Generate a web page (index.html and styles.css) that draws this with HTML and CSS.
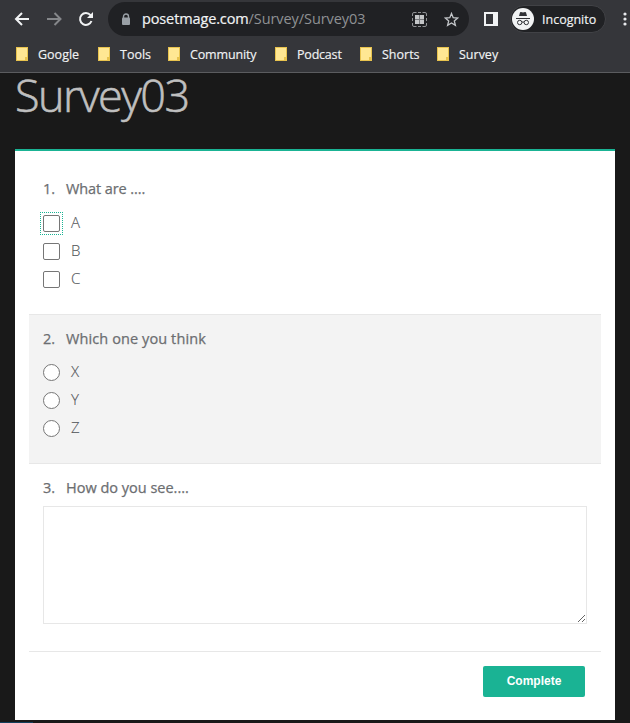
FILE: index.html
```html
<!DOCTYPE html>
<html lang="en">
<head>
<meta charset="utf-8">
<title>Survey03</title>
<link rel="stylesheet" href="styles.css">
</head>
<body>
<header class="browser">
  <div class="toolbar">
    <svg class="nav" width="108" height="38" viewBox="0 0 108 38" fill="none" stroke-width="2">
      <path d="M29 19H16.500M22 13l-6 6 6 6" stroke="#f1f3f4"/>
      <path d="M47 19H60M54.500 13l6 6-6 6" stroke="#85878a"/>
      <path d="M90.500 15.200A5.900 5.900 0 1 0 91.500 21" stroke="#f1f3f4"/>
      <path d="M93 12v6h-6z" fill="#f1f3f4"/>
    </svg>
    <div class="omnibox">
      <svg class="lock" width="10" height="13" viewBox="0 0 10 13"><path d="M2.500 5V3.500a2.500 2.500 0 0 1 5 0V5" fill="none" stroke="#9aa0a6" stroke-width="1.400"/><rect x="1" y="4.500" width="8" height="7.500" rx="1" fill="#9aa0a6"/></svg>
      <span class="url"><span class="host">posetmage.com</span><span class="path">/Survey/Survey03</span></span>
      <svg class="qr" width="15" height="15" viewBox="0 0 15 15"><path d="M.5 4V2Q.5.500 2 .5h2.500M6 .5h3M10.500.500H13q1.500 0 1.500 1.500v2M14.500 6v3M14.500 11v2q0 1.500-1.500 1.500h-2.500M9 14.500H6M4.500 14.500H2Q.5 14.500.500 13v-2M.5 9V6" fill="none" stroke="#909295"/><path d="M3 3h4v4H3zM8 3h4v4H8zM3 8h4v4H3zM8 8h4v4H8z" fill="#c4c6c8"/><path d="M7 3h1v9H7zM3 7h9v1H3z" fill="#77797c"/></svg>
      <svg class="star" width="15" height="15" viewBox="0 0 15 15"><path d="M7.500 1.500l1.700 4.200 4.500.3-3.400 2.900 1.100 4.400-3.900-2.400-3.900 2.400 1.100-4.400L1.300 6l4.500-.3z" fill="none" stroke="#c4c7ca" stroke-width="1.300"/></svg>
    </div>
    <svg class="panel" width="14" height="14" viewBox="0 0 14 14"><path d="M0 0h14v14H0zM2 2v10h7V2z" fill="#f1f3f4" fill-rule="evenodd"/></svg>
    <div class="profile">
      <svg width="22" height="22" viewBox="0 0 22 22"><circle cx="11" cy="11" r="11" fill="#f1f3f4"/><path d="M7 8l1-3.500q.3-.8 1-.5l2 .5 2-.5q.7-.3 1 .5L15 8z" fill="#303236"/><path d="M4 10.500h14" stroke="#303236"/><g fill="none" stroke="#303236"><circle cx="7.700" cy="14.500" r="2.200"/><circle cx="14.300" cy="14.500" r="2.200"/><path d="M10 14.200q1-.6 2 0"/></g></svg>
      <span class="profile-name">Incognito</span>
    </div>
    <svg class="more" width="4" height="14" viewBox="0 0 4 14" fill="#e8eaed"><circle cx="2" cy="2" r="1.600"/><circle cx="2" cy="7" r="1.600"/><circle cx="2" cy="12" r="1.600"/></svg>
  </div>
  <nav class="bookmarks">
    <a class="bm"><i class="folder"></i><span>Google</span></a>
    <a class="bm"><i class="folder"></i><span>Tools</span></a>
    <a class="bm"><i class="folder"></i><span class="t-community">Community</span></a>
    <a class="bm"><i class="folder"></i><span class="t-podcast">Podcast</span></a>
    <a class="bm"><i class="folder"></i><span>Shorts</span></a>
    <a class="bm"><i class="folder"></i><span>Survey</span></a>
  </nav>
</header>
<main>
  <h1>Survey03</h1>
  <form class="card">
    <section class="question first">
      <h2><span class="num">1.</span><span class="q1">What are ....</span></h2>
      <label class="option"><span class="box focused"></span><span>A</span></label>
      <label class="option"><span class="box"></span><span>B</span></label>
      <label class="option"><span class="box"></span><span>C</span></label>
    </section>
    <section class="question shaded">
      <h2><span class="num">2.</span><span class="q2">Which one you think</span></h2>
      <label class="option"><span class="box round"></span><span>X</span></label>
      <label class="option"><span class="box round"></span><span>Y</span></label>
      <label class="option"><span class="box round"></span><span>Z</span></label>
    </section>
    <section class="question last">
      <h2><span class="num">3.</span><span class="q3">How do you see....</span></h2>
      <textarea></textarea>
    </section>
    <footer><button type="button">Complete</button></footer>
  </form>
</main>
<div class="status"></div>
</body>
</html>
```
FILE: styles.css
```css
* { box-sizing: border-box; }
body {
  margin: 0;
  height: 723px;
  overflow: hidden;
  display: flex;
  flex-direction: column;
  background: #191919;
  font-family: "Open Sans", "Noto Sans", sans-serif;
}
.browser {
  height: 73px;
  flex: none;
  background: #35363a;
  border-bottom: 1px solid #5b5c5f;
  color: #f1f3f4;
}
.toolbar { height: 38px; display: flex; align-items: center; }
.toolbar > * { flex: none; }
.omnibox {
  width: 361px;
  height: 34px;
  border-radius: 17px;
  background: #202124;
  display: flex;
  align-items: center;
  padding-left: 13px;
}
.omnibox > * { flex: none; }
.url { width: 270px; margin-left: 11px; font-size: 14.5px; line-height: 20px; white-space: nowrap; }
.host { letter-spacing: -.13px; -webkit-text-stroke: .2px; }
.path { color: #8f9194; letter-spacing: -.07px; }
.star { margin-left: 17px; }
.panel { margin-left: 15px; }
.profile {
  width: 96px;
  height: 28px;
  margin-left: 12px;
  padding-left: 1px;
  border: 1px solid #414246;
  border-radius: 14px;
  background: #202124;
  display: flex;
  align-items: center;
  -webkit-text-stroke: .15px;
}
.profile-name { margin-left: 8px; font-size: 12.5px; white-space: nowrap; }
.more { margin-left: 17px; }
.bookmarks {
  height: 34px;
  padding-left: 16px;
  display: grid;
  grid-template-columns: 82px 70px 107px 85px 77px 80px;
  align-items: center;
  font-size: 12.5px;
  line-height: 16px;
  -webkit-text-stroke: .15px;
}
.bm { display: flex; align-items: center; height: 16px; white-space: nowrap; }
.t-community { letter-spacing: -.15px; }
.t-podcast { letter-spacing: -.2px; }
.folder {
  width: 12px;
  height: 14px;
  margin: -2px 10px 0 0;
  flex: none;
  background: linear-gradient(#e8c34e, #e8c34e) 8px 9px / 2px 4px no-repeat, #ffe793;
  border: 1px solid #e8c34e;
}
main { padding: 0 15px; }
h1 {
  margin: 0;
  height: 76px;
  font-size: 45px;
  font-weight: 300;
  line-height: 43px;
  letter-spacing: -1.55px;
  color: #bfbfbf;
  -webkit-text-stroke: .6px;
}
.card {
  height: 571px;
  padding: 0 14px;
  background: #fff;
  border-top: 2px solid #1ab394;
}
.question { padding: 0 14px; }
.first { height: 163px; padding-top: 26px; }
.shaded {
  height: 150px;
  padding-top: 12px;
  background: #f3f3f3;
  border-top: 1px solid #e7e7e7;
  border-bottom: 1px solid #e7e7e7;
}
.last { height: 187px; padding-top: 12px; }
h2 {
  display: flex;
  margin: 0;
  height: 23px;
  font-size: 14.5px;
  line-height: 23px;
  font-weight: 400;
  color: #6c6e71;
  white-space: nowrap;
  -webkit-text-stroke: .25px;
}
.num { width: 23px; }
.q1 { letter-spacing: -.1px; }
.q2 { letter-spacing: .1px; }
.option {
  display: flex;
  align-items: center;
  height: 28px;
  gap: 11px;
  font-size: 15px;
  font-weight: 300;
  line-height: 26px;
  color: #55585c;
}
.option span:last-child { height: 28px; -webkit-text-stroke: .15px; }
.first h2 { margin-bottom: 9px; }
.shaded h2 { margin-bottom: 8px; }
.box {
  position: relative;
  width: 17px;
  height: 17px;
  border: 1px solid #767676;
  border-radius: 2px;
  background: #fff;
}
.focused::after {
  content: "";
  position: absolute;
  inset: -4px;
  border: 1px dotted #1ab394;
}
.round { border-radius: 50%; }
textarea {
  display: block;
  width: 544px;
  height: 118px;
  margin-top: 7px;
  border: 1px solid #e7e7e7;
  background: #fff;
  outline: none;
  resize: both;
}
footer {
  height: 69px;
  padding: 14px 16px 0 0;
  border-top: 1px solid #e7e7e7;
  text-align: right;
}
button {
  width: 102px;
  height: 31px;
  padding: 0 0 2px;
  border: 0;
  border-radius: 2px;
  background: #1ab394;
  color: #fff;
  font: bold 12px "Liberation Sans", sans-serif;
}
.status { width: 33px; height: 1px; margin-top: auto; background: #123f5c; }
```
